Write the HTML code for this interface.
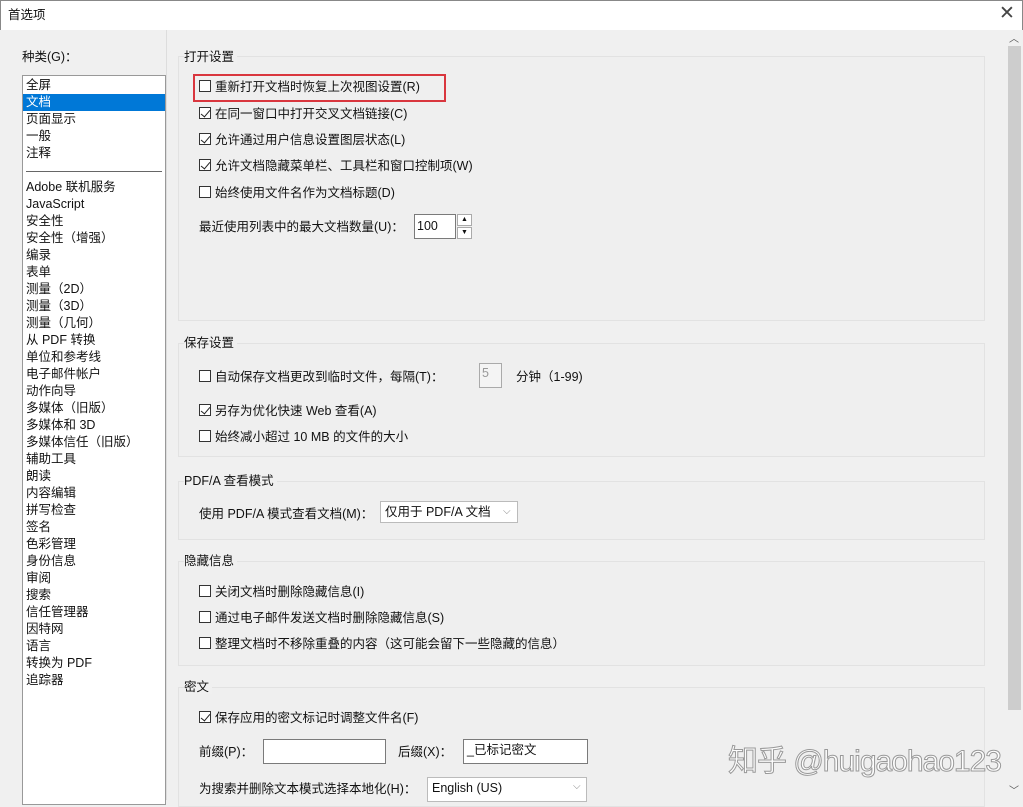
<!DOCTYPE html>
<html><head><meta charset="utf-8"><style>
*{margin:0;padding:0;box-sizing:border-box}
body{width:1023px;height:800px;overflow:hidden;background:#f0f0f0;font-family:"Liberation Sans","Noto Sans CJK SC",sans-serif;font-size:12.5px;line-height:14px;color:#111;position:relative}
.a{position:absolute;white-space:nowrap}
.title{left:0;top:0;width:1023px;height:30px;background:#fff;border-top:1px solid #888;border-left:1px solid #888;border-right:1px solid #888}
.list{left:22px;top:75px;width:144px;height:730px;background:#fff;border:1px solid #999}
.list div{position:absolute;left:3px;height:17px;line-height:17px}
.grp{border:1px solid #e2e2e2;background:#efefef;left:178px;width:807px}
.cb{position:absolute;width:12px;height:12px;border:1px solid #333;background:#fff}
.cb.c::after{content:"";position:absolute;left:3px;top:0px;width:4px;height:8px;border-right:1.3px solid #222;border-bottom:1.3px solid #222;transform:rotate(40deg)}
.inp{position:absolute;background:#fff;border:1px solid #7a7a7a}
.sel{position:absolute;background:#fff;border:1px solid #bbb}
</style></head><body>
<div class="a title"></div>
<div class="a" style="left:8px;top:8px">首选项</div>
<div class="a" style="left:999px;top:4px;font-size:19px;line-height:20px;color:#444;font-weight:300">✕</div>
<div class="a" style="left:22px;top:50px">种类(G)：</div>
<div class="a list">
<div style="top:1px">全屏</div>
<div style="top:18px;left:0;width:142px;padding-left:3px;background:#0078d7;color:#fff">文档</div>
<div style="top:35px">页面显示</div>
<div style="top:52px">一般</div>
<div style="top:69px">注释</div>
<div style="top:95px;left:3px;width:136px;height:1px;background:#666"></div>
<div style="top:103px">Adobe 联机服务</div>
<div style="top:120px">JavaScript</div>
<div style="top:137px">安全性</div>
<div style="top:154px">安全性（增强）</div>
<div style="top:171px">编录</div>
<div style="top:188px">表单</div>
<div style="top:205px">测量（2D）</div>
<div style="top:222px">测量（3D）</div>
<div style="top:239px">测量（几何）</div>
<div style="top:256px">从 PDF 转换</div>
<div style="top:273px">单位和参考线</div>
<div style="top:290px">电子邮件帐户</div>
<div style="top:307px">动作向导</div>
<div style="top:324px">多媒体（旧版）</div>
<div style="top:341px">多媒体和 3D</div>
<div style="top:358px">多媒体信任（旧版）</div>
<div style="top:375px">辅助工具</div>
<div style="top:392px">朗读</div>
<div style="top:409px">内容编辑</div>
<div style="top:426px">拼写检查</div>
<div style="top:443px">签名</div>
<div style="top:460px">色彩管理</div>
<div style="top:477px">身份信息</div>
<div style="top:494px">审阅</div>
<div style="top:511px">搜索</div>
<div style="top:528px">信任管理器</div>
<div style="top:545px">因特网</div>
<div style="top:562px">语言</div>
<div style="top:579px">转换为 PDF</div>
<div style="top:596px">追踪器</div>
</div>
<div class="a" style="left:166px;top:30px;width:1px;height:770px;background:#ddd"></div>

<div class="a grp" style="top:56px;height:265px"></div>
<div class="a" style="left:184px;top:50px;background:#f0f0f0;padding-right:3px">打开设置</div>
<div class="a" style="left:193px;top:74px;width:253px;height:28px;border:2px solid #d9363e"></div>
<div class="cb" style="left:199px;top:80px"></div><div class="a" style="left:215px;top:80px">重新打开文档时恢复上次视图设置(R)</div>
<div class="cb c" style="left:199px;top:107px"></div><div class="a" style="left:215px;top:107px">在同一窗口中打开交叉文档链接(C)</div>
<div class="cb c" style="left:199px;top:133px"></div><div class="a" style="left:215px;top:133px">允许通过用户信息设置图层状态(L)</div>
<div class="cb c" style="left:199px;top:159px"></div><div class="a" style="left:215px;top:159px">允许文档隐藏菜单栏、工具栏和窗口控制项(W)</div>
<div class="cb" style="left:199px;top:186px"></div><div class="a" style="left:215px;top:186px">始终使用文件名作为文档标题(D)</div>
<div class="a" style="left:199px;top:220px">最近使用列表中的最大文档数量(U)：</div>
<div class="inp" style="left:414px;top:214px;width:42px;height:25px"></div>
<div class="a" style="left:417px;top:219px">100</div>
<div class="a" style="left:457px;top:214px;width:15px;height:12px;border:1px solid #aaa;background:#fff;font-size:7px;text-align:center;line-height:10px">▲</div>
<div class="a" style="left:457px;top:227px;width:15px;height:12px;border:1px solid #aaa;background:#fff;font-size:7px;text-align:center;line-height:10px">▼</div>

<div class="a grp" style="top:343px;height:114px"></div>
<div class="a" style="left:184px;top:336px;background:#f0f0f0;padding-right:3px">保存设置</div>
<div class="cb" style="left:199px;top:370px"></div><div class="a" style="left:215px;top:370px">自动保存文档更改到临时文件，每隔(T)：</div>
<div class="a" style="left:479px;top:363px;width:23px;height:25px;border:1px solid #aaa;background:#f4f4f4;color:#999;padding:2px">5</div>
<div class="a" style="left:516px;top:370px">分钟（1-99)</div>
<div class="cb c" style="left:199px;top:404px"></div><div class="a" style="left:215px;top:404px">另存为优化快速 Web 查看(A)</div>
<div class="cb" style="left:199px;top:430px"></div><div class="a" style="left:215px;top:430px">始终减小超过 10 MB 的文件的大小</div>

<div class="a grp" style="top:481px;height:59px"></div>
<div class="a" style="left:184px;top:474px;background:#f0f0f0;padding-right:3px">PDF/A 查看模式</div>
<div class="a" style="left:199px;top:507px">使用 PDF/A 模式查看文档(M)：</div>
<div class="sel" style="left:380px;top:501px;width:138px;height:22px"></div>
<div class="a" style="left:385px;top:505px">仅用于 PDF/A 文档</div>
<div class="a" style="left:503px;top:505px;color:#888;font-size:10px">⌵</div>

<div class="a grp" style="top:561px;height:105px"></div>
<div class="a" style="left:184px;top:554px;background:#f0f0f0;padding-right:3px">隐藏信息</div>
<div class="cb" style="left:199px;top:585px"></div><div class="a" style="left:215px;top:585px">关闭文档时删除隐藏信息(I)</div>
<div class="cb" style="left:199px;top:611px"></div><div class="a" style="left:215px;top:611px">通过电子邮件发送文档时删除隐藏信息(S)</div>
<div class="cb" style="left:199px;top:637px"></div><div class="a" style="left:215px;top:637px">整理文档时不移除重叠的内容（这可能会留下一些隐藏的信息）</div>

<div class="a grp" style="top:687px;height:120px"></div>
<div class="a" style="left:184px;top:680px;background:#f0f0f0;padding-right:3px">密文</div>
<div class="cb c" style="left:199px;top:711px"></div><div class="a" style="left:215px;top:711px">保存应用的密文标记时调整文件名(F)</div>
<div class="a" style="left:199px;top:745px">前缀(P)：</div>
<div class="inp" style="left:263px;top:739px;width:123px;height:25px"></div>
<div class="a" style="left:398px;top:745px">后缀(X)：</div>
<div class="inp" style="left:463px;top:739px;width:125px;height:25px"></div>
<div class="a" style="left:467px;top:743px">_已标记密文</div>
<div class="a" style="left:199px;top:782px">为搜索并删除文本模式选择本地化(H)：</div>
<div class="sel" style="left:427px;top:777px;width:160px;height:25px"></div>
<div class="a" style="left:432px;top:781px">English (US)</div>
<div class="a" style="left:573px;top:780px;color:#888;font-size:10px">⌵</div>

<div class="a" style="left:1006px;top:30px;width:17px;height:770px;background:#f0f0f0"></div>
<div class="a" style="left:1008px;top:46px;width:13px;height:664px;background:#cdcdcd"></div>
<div class="a" style="left:1009px;top:33px;font-size:10px;color:#555">︿</div>
<div class="a" style="left:1009px;top:785px;font-size:10px;color:#555">﹀</div>
<div class="a" style="left:728px;top:746px;font-size:30px;line-height:32px;color:rgba(255,255,255,0.85);-webkit-text-stroke:1px #999;letter-spacing:-1px">知乎 @huigaohao123</div>
</body></html>
